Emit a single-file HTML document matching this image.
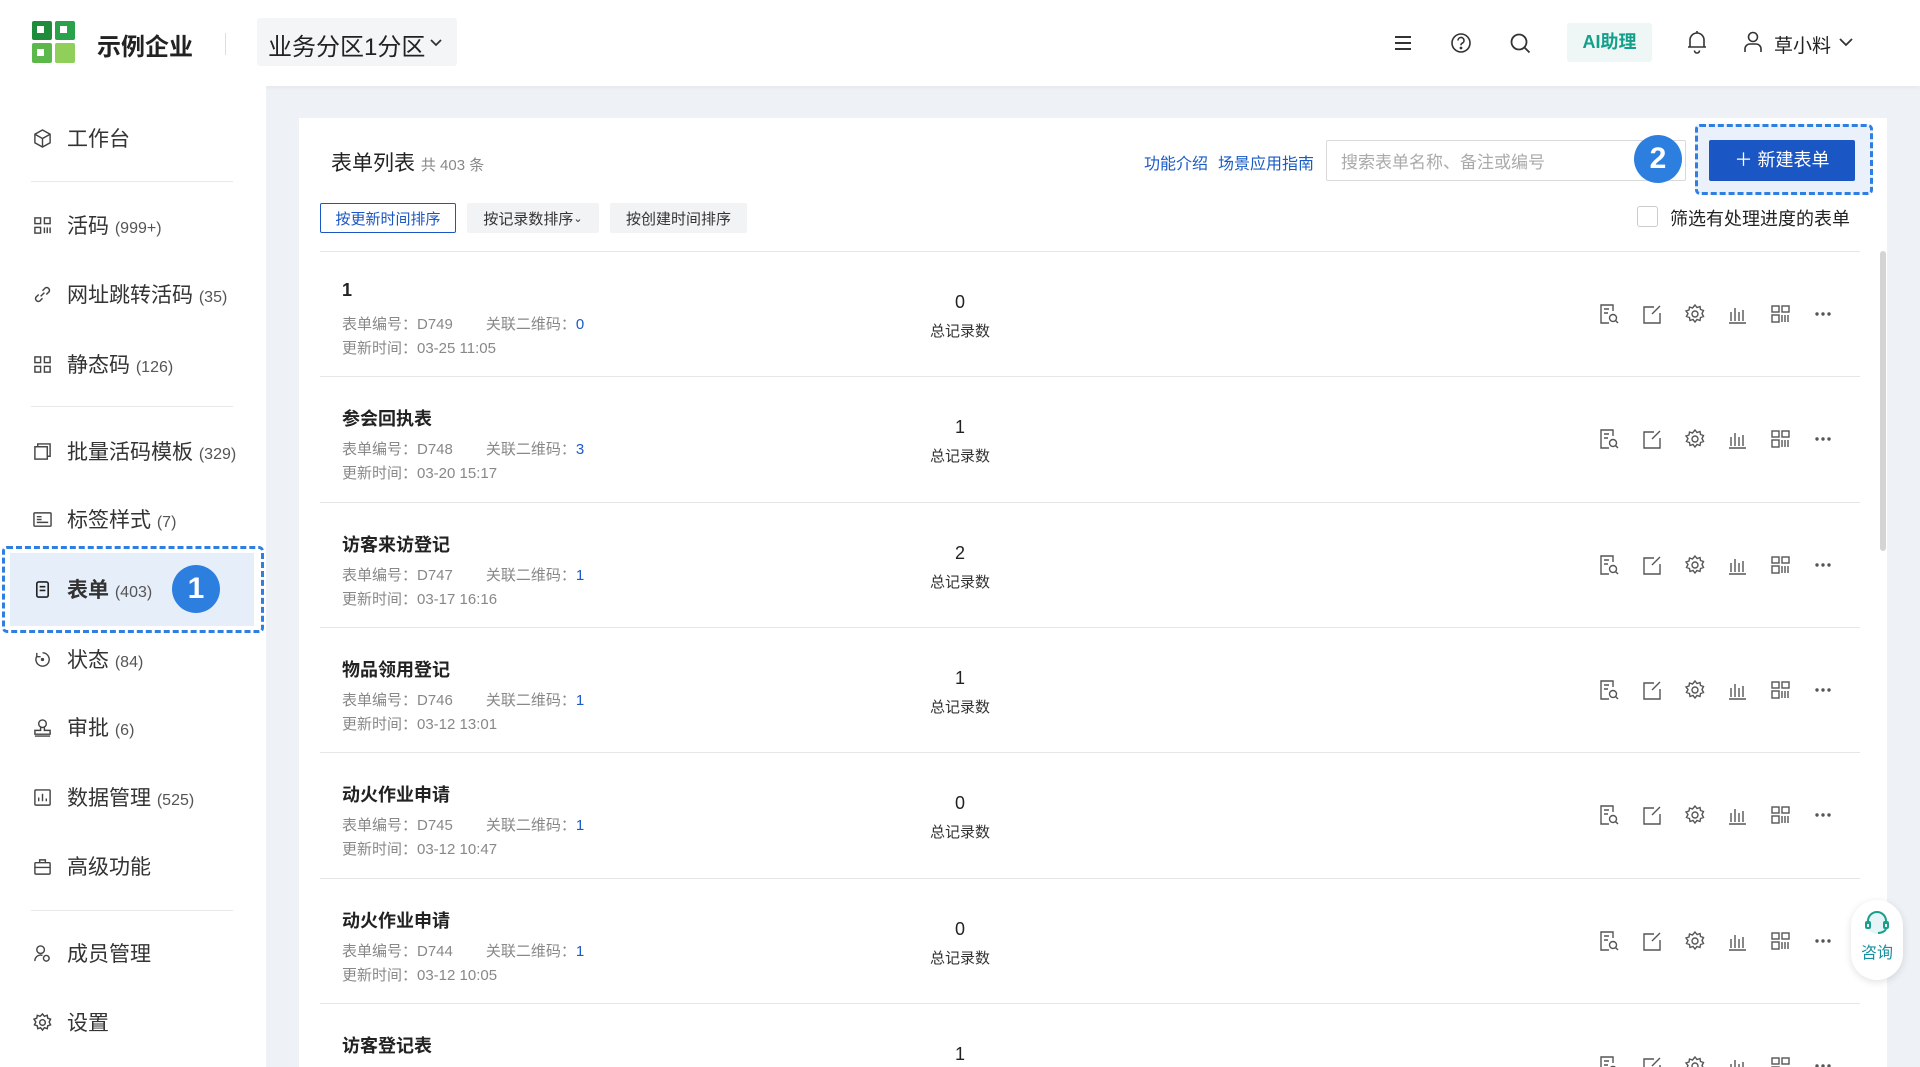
<!DOCTYPE html>
<html style="width:1920px;height:1067px;overflow:hidden"><head><meta charset="utf-8"><style>
*{margin:0;padding:0;box-sizing:border-box}
body{width:1920px;height:1067px;overflow:hidden;background:#eef1f5;font-family:"Liberation Sans","Noto Sans CJK SC",sans-serif;color:#222;position:relative}
.a{position:absolute}
.hdr{left:0;top:0;width:1920px;height:86px;background:#fff;box-shadow:0 2px 4px rgba(0,0,0,.04)}
.side{left:0;top:86px;width:266px;height:981px;background:#fff}
.ni{position:absolute;left:0;width:266px;height:40px;display:flex;align-items:center;font-size:21px;color:#333}
.ni svg{position:absolute;left:33px;width:19px;height:19px}
.ni span{position:absolute;left:67px;white-space:nowrap}
.ni small{font-size:16px;color:#555}
.dv{position:absolute;left:31px;width:202px;height:1px;background:#e8e8e8}
.card{left:299px;top:118px;width:1588px;height:949px;background:#fff}
.sb{position:absolute;top:203px;height:30px;font-size:15px;display:flex;align-items:center;justify-content:center;background:#f2f3f5;color:#333;border-radius:2px}
.row{position:absolute;left:21px;width:1540px;height:125px;border-top:1px solid #e6e6e6}
.t{position:absolute;left:22px;top:28px;font-size:18px;font-weight:bold;color:#222}
.m{position:absolute;left:22px;font-size:15px;color:#888;white-space:nowrap}
.m b{font-weight:normal;color:#1a5bc4}
.n{position:absolute;left:600px;width:80px;text-align:center;font-size:18px;top:40px}
.nl{position:absolute;left:600px;width:80px;text-align:center;font-size:15px;top:68px;color:#333}
.ic{position:absolute;top:51px;width:22px;height:22px}
</style></head><body>
<div class="a hdr"></div>
<svg class="a" style="left:32px;top:21px" width="44" height="43" viewBox="0 0 44 43"><rect x="0" y="0" width="20" height="19" rx="2" fill="#1e8c3a"/><rect x="23" y="0" width="20" height="19" rx="2" fill="#2aa24a"/><rect x="0" y="22" width="20" height="20" rx="2" fill="#5cb84a"/><rect x="23" y="22" width="20" height="20" rx="2" fill="#8fcf5a"/><rect x="5" y="5" width="7" height="7" fill="#fff"/><rect x="28" y="5" width="7" height="7" fill="#fff"/><rect x="5" y="28" width="7" height="7" fill="#fff"/></svg>
<div class="a" style="left:97px;top:27px;font-size:24px;font-weight:bold;color:#222">示例企业</div>
<div class="a" style="left:225px;top:33px;width:1px;height:22px;background:#ddd"></div>
<div class="a" style="left:257px;top:18px;width:200px;height:48px;background:#f4f5f7;border-radius:3px"></div>
<div class="a" style="left:268px;top:27px;font-size:24px;color:#222">业务分区1分区</div>
<svg class="a" style="left:430px;top:38px" width="12" height="9" viewBox="0 0 12 9" fill="none" stroke="#333" stroke-width="1.8"><path d="M1 2l5 5 5-5"/></svg>
<svg class="a" style="left:1393px;top:33px" width="20" height="20" viewBox="0 0 20 20" stroke="#333" stroke-width="2"><path d="M2 4h16M2 10h16M2 16h16"/></svg>
<svg class="a" style="left:1450px;top:32px" width="22" height="22" viewBox="0 0 22 22" fill="none" stroke="#333" stroke-width="1.6"><circle cx="11" cy="11" r="9"/><path d="M8 8.5a3 3 0 1 1 4 2.8c-.8.4-1 1-1 2"/><circle cx="11" cy="16" r=".6" fill="#333"/></svg>
<svg class="a" style="left:1509px;top:32px" width="22" height="22" viewBox="0 0 22 22" fill="none" stroke="#333" stroke-width="1.8"><circle cx="10" cy="10" r="7.5"/><path d="M15.5 15.5l5 5"/></svg>
<div class="a" style="left:1567px;top:23px;width:85px;height:39px;background:#eef7f5;border-radius:3px;color:#12a08a;font-size:18px;font-weight:bold;text-align:center;line-height:39px">AI助理</div>
<svg class="a" style="left:1686px;top:30px" width="22" height="24" viewBox="0 0 22 24" fill="none" stroke="#333" stroke-width="1.6"><path d="M4 17V10a7 7 0 0 1 14 0v7zM2 17h18M8.5 20.5a2.5 2.5 0 0 0 5 0M11 1v2"/></svg>
<svg class="a" style="left:1743px;top:31px" width="20" height="22" viewBox="0 0 20 22" fill="none" stroke="#333" stroke-width="1.6"><circle cx="10" cy="6" r="4.5"/><path d="M2 21v-3a5 5 0 0 1 5-5h6a5 5 0 0 1 5 5v3"/></svg>
<div class="a" style="left:1774px;top:31px;font-size:19px;color:#222">草小料</div>
<svg class="a" style="left:1839px;top:37px" width="14" height="10" viewBox="0 0 14 10" fill="none" stroke="#333" stroke-width="1.8"><path d="M1 2l6 6 6-6"/></svg>

<div class="a side"></div>
<div class="a" style="left:0;top:0;width:266px;height:1067px">
<div class="ni" style="top:118px"><svg viewBox="0 0 20 20" fill="none" stroke="#444" stroke-width="1.5"><path d="M10 1l8 4.5v9L10 19l-8-4.5v-9zM2 5.5l8 4.5 8-4.5M10 10v9"/></svg><span>工作台</span></div>
<div class="dv" style="top:181px"></div>
<div class="ni" style="top:205px"><svg viewBox="0 0 20 20" fill="none" stroke="#444" stroke-width="1.5"><rect x="2" y="2" width="6" height="6"/><rect x="12" y="2" width="6" height="6"/><rect x="2" y="12" width="6" height="6"/><path d="M12 12v6M15 12v6M18 12v6"/></svg><span>活码 <small>(999+)</small></span></div>
<div class="ni" style="top:274px"><svg viewBox="0 0 20 20" fill="none" stroke="#444" stroke-width="1.5"><path d="M8 12l4-4M6 10l-3 3a3 3 0 0 0 4 4l3-3M14 10l3-3a3 3 0 0 0-4-4l-3 3"/></svg><span>网址跳转活码 <small>(35)</small></span></div>
<div class="ni" style="top:344px"><svg viewBox="0 0 20 20" fill="none" stroke="#444" stroke-width="1.5"><rect x="2" y="2" width="6" height="6"/><rect x="12" y="2" width="6" height="6"/><rect x="2" y="12" width="6" height="6"/><rect x="12" y="12" width="6" height="6"/></svg><span>静态码 <small>(126)</small></span></div>
<div class="dv" style="top:406px"></div>
<div class="ni" style="top:431px"><svg viewBox="0 0 20 20" fill="none" stroke="#444" stroke-width="1.5"><rect x="2" y="5" width="13" height="13"/><path d="M5 5V2h13v13h-3"/></svg><span>批量活码模板 <small>(329)</small></span></div>
<div class="ni" style="top:499px"><svg viewBox="0 0 20 20" fill="none" stroke="#444" stroke-width="1.5"><rect x="1" y="3" width="18" height="14" rx="1"/><path d="M4 7h5M4 10h5M4 13h12"/></svg><span>标签样式 <small>(7)</small></span></div>
<div class="a" style="left:2px;top:546px;width:262px;height:87px;border:3px dashed #2f7fe0;border-radius:5px;background:#fff"></div>
<div class="a" style="left:10px;top:553px;width:244px;height:73px;background:#e6eef9"></div>
<div class="ni" style="top:569px;font-weight:bold"><svg viewBox="0 0 20 20" fill="none" stroke="#222" stroke-width="1.7"><rect x="4" y="2" width="12" height="16" rx="2"/><path d="M7 7h6M7 11h6"/></svg><span>表单 <small style="font-weight:normal">(403)</small></span></div>
<div class="a" style="left:172px;top:565px;width:48px;height:48px;border-radius:50%;background:#2d7fdf;color:#fff;font-size:30px;font-weight:bold;text-align:center;line-height:48px">1</div>
<div class="ni" style="top:639px"><svg viewBox="0 0 20 20" fill="none" stroke="#444" stroke-width="1.5"><path d="M10 3a7 7 0 1 1-6 3.5M4 3v4h4"/><circle cx="10" cy="10" r="1" fill="#444"/></svg><span>状态 <small>(84)</small></span></div>
<div class="ni" style="top:707px"><svg viewBox="0 0 20 20" fill="none" stroke="#444" stroke-width="1.5"><circle cx="10" cy="6" r="4"/><path d="M8 10v3H2v4h16v-4h-6v-3M2 19h16"/></svg><span>审批 <small>(6)</small></span></div>
<div class="ni" style="top:777px"><svg viewBox="0 0 20 20" fill="none" stroke="#444" stroke-width="1.5"><rect x="2" y="2" width="16" height="16" rx="1"/><path d="M6 14v-4M10 14V6M14 14v-3"/></svg><span>数据管理 <small>(525)</small></span></div>
<div class="ni" style="top:846px"><svg viewBox="0 0 20 20" fill="none" stroke="#444" stroke-width="1.5"><rect x="2" y="6" width="16" height="12" rx="1"/><path d="M7 6V3h6v3M2 11h16"/></svg><span>高级功能</span></div>
<div class="dv" style="top:910px"></div>
<div class="ni" style="top:933px"><svg viewBox="0 0 20 20" fill="none" stroke="#444" stroke-width="1.5"><circle cx="8" cy="6" r="4"/><path d="M2 18a6 6 0 0 1 8-6"/><circle cx="14" cy="15" r="3"/></svg><span>成员管理</span></div>
<div class="ni" style="top:1002px"><svg viewBox="0 0 20 20" fill="none" stroke="#444" stroke-width="1.5"><circle cx="10" cy="10" r="3"/><path d="M10 1l2 2.5 3-1 .5 3 3 1-1.5 3 1.5 3-3 1-.5 3-3-1-2 2.5-2-2.5-3 1-.5-3-3-1 1.5-3L1 6.5l3-1 .5-3 3 1z"/></svg><span>设置</span></div>
</div>

<div class="a card"></div>
<div class="a" style="left:331px;top:147px;font-size:21px;color:#222">表单列表 <span style="font-size:15px;color:#888">共 403 条</span></div>
<div class="a" style="left:1144px;top:150px;font-size:16px;color:#1a5bc4">功能介绍</div>
<div class="a" style="left:1218px;top:150px;font-size:16px;color:#1a5bc4">场景应用指南</div>
<div class="a" style="left:1326px;top:140px;width:360px;height:41px;border:1px solid #d9d9d9;border-radius:2px;font-size:17px;color:#aaa;padding:7px 14px">搜索表单名称、备注或编号</div>
<div class="a" style="left:1634px;top:135px;width:48px;height:48px;border-radius:50%;background:#2d7fdf;color:#fff;font-size:30px;font-weight:bold;text-align:center;line-height:48px">2</div>
<div class="a" style="left:1695px;top:124px;width:178px;height:71px;border:3px dashed #2f7fe0;border-radius:5px;background:#eaf1fb"></div>
<div class="a" style="left:1709px;top:140px;width:146px;height:41px;background:#1a56c4;border-radius:2px;color:#fff;font-size:18px;text-align:center;line-height:41px">＋ 新建表单</div>
<div class="sb" style="left:320px;width:136px;background:#fff;border:1px solid #1a56c4;color:#1a56c4">按更新时间排序</div>
<div class="sb" style="left:467px;width:132px">按记录数排序 <span style="font-size:11px">⌄</span></div>
<div class="sb" style="left:610px;width:137px">按创建时间排序</div>
<div class="a" style="left:1637px;top:206px;width:21px;height:21px;border:1px solid #ccc;border-radius:3px"></div>
<div class="a" style="left:1670px;top:205px;font-size:18px;color:#222">筛选有处理进度的表单</div>
<div class="a" style="left:1880px;top:251px;width:6px;height:300px;background:#d4d4d4;border-radius:3px"></div>

<div class="a" id="rows" style="left:299px;top:0;width:1570px;height:1067px;overflow:hidden"></div>
<script>
var d=[["1","D749","0","03-25 11:05","0"],["参会回执表","D748","3","03-20 15:17","1"],["访客来访登记","D747","1","03-17 16:16","2"],["物品领用登记","D746","1","03-12 13:01","1"],["动火作业申请","D745","1","03-12 10:47","0"],["动火作业申请","D744","1","03-12 10:05","0"],["访客登记表","","","","1"]];
var ic='<svg class="ic" style="left:LEFTpx" viewBox="0 0 22 22" fill="none" stroke="#555" stroke-width="1.4">PATH</svg>';
var P=['<path d="M15 8V2H3v18h8M6 6h5M6 10h4"/><circle cx="15" cy="15" r="3.5"/><path d="M17.5 17.5L20 20"/>','<path d="M19 10v10H3V4h10M19 3l-8 8"/>','<circle cx="11" cy="11" r="3"/><path d="M11 2l2 2.5 3-1 .5 3 3 1-1.5 3 1.5 3-3 1-.5 3-3-1-2 2.5-2-2.5-3 1-.5-3-3-1 1.5-3L2 8l3-1 .5-3 3 1z"/>','<path d="M3 20h17M5 18V9M9 18V5M13 18V9M17 18V7"/>','<rect x="3" y="3" width="7" height="6"/><rect x="13" y="3" width="7" height="6"/><rect x="3" y="12" width="7" height="7"/><path d="M13 12v7M16 12v7M19 12v7"/>','<circle cx="5" cy="11" r="1" fill="#555"/><circle cx="11" cy="11" r="1" fill="#555"/><circle cx="17" cy="11" r="1" fill="#555"/>'];
var X=[1278,1321,1364,1406,1449,1492],h='';
d.forEach(function(r,i){var top=251+i*125.3;h+='<div class="row" style="top:'+top+'px"><div class="t">'+r[0]+'</div>';
if(r[1]){h+='<div class="m" style="top:61px">表单编号：'+r[1]+'<span style="margin-left:33px">关联二维码：<b>'+r[2]+'</b></span></div><div class="m" style="top:85px">更新时间：'+r[3]+'</div>';}
h+='<div class="n">'+r[4]+'</div><div class="nl">总记录数</div>';
X.forEach(function(x,j){h+=ic.replace('LEFT',x).replace('PATH',P[j]);});h+='</div>';});
document.getElementById('rows').innerHTML=h;
</script>
<div class="a" style="left:1851px;top:900px;width:52px;height:80px;background:#fff;border-radius:26px;box-shadow:0 2px 8px rgba(0,0,0,.12);text-align:center">
<svg style="margin-top:10px" width="28" height="26" viewBox="0 0 28 26" fill="none" stroke="#1a9f8c" stroke-width="2"><circle cx="14" cy="13" r="11" fill="#e5f4f6" stroke="none"/><path d="M5 14v-3a9 9 0 0 1 18 0v3"/><rect x="3" y="12" width="4" height="6" rx="1"/><rect x="21" y="12" width="4" height="6" rx="1"/><path d="M23 18c0 3-4 5-8 5"/></svg>
<div style="font-size:16px;color:#1a8fa0;margin-top:-2px">咨询</div></div>
</body></html>
